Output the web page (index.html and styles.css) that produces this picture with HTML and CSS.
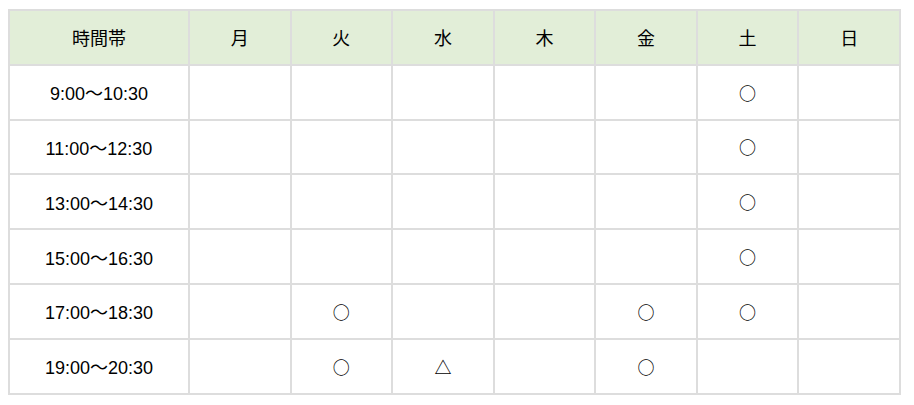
FILE: index.html
```html
<!DOCTYPE html>
<html lang="ja">
<head>
<meta charset="utf-8">
<link rel="stylesheet" href="styles.css">
</head>
<body>
<table class="schedule">
  <colgroup>
    <col class="col-time">
    <col span="7">
  </colgroup>
  <thead>
    <tr>
      <th>時間帯</th><th>月</th><th>火</th><th>水</th><th>木</th><th>金</th><th>土</th><th>日</th>
    </tr>
  </thead>
  <tbody>
    <tr><td>9:00～10:30</td><td></td><td></td><td></td><td></td><td></td><td class="mark">○</td><td></td></tr>
    <tr><td>11:00～12:30</td><td></td><td></td><td></td><td></td><td></td><td class="mark">○</td><td></td></tr>
    <tr><td>13:00～14:30</td><td></td><td></td><td></td><td></td><td></td><td class="mark">○</td><td></td></tr>
    <tr><td>15:00～16:30</td><td></td><td></td><td></td><td></td><td></td><td class="mark">○</td><td></td></tr>
    <tr><td>17:00～18:30</td><td></td><td class="mark">○</td><td></td><td></td><td class="mark">○</td><td class="mark">○</td><td></td></tr>
    <tr><td>19:00～20:30</td><td></td><td class="mark">○</td><td class="mark">△</td><td></td><td class="mark">○</td><td></td><td></td></tr>
  </tbody>
</table>
</body>
</html>
```

FILE: styles.css
```css
html, body {
  background: #ffffff;
}
body {
  margin: 9px 8px;
  font-family: "Liberation Sans", "Noto Sans CJK JP", sans-serif;
  font-size: 18px;
  color: #000000;
}
.schedule {
  width: 893px;
  table-layout: fixed;
  border-collapse: separate;
  border-spacing: 0;
  border-top: 2px solid #dddddd;
  border-left: 2px solid #dddddd;
}
.col-time {
  width: 180px;
}
.schedule th,
.schedule td {
  border-right: 2px solid #dddddd;
  border-bottom: 2px solid #dddddd;
  padding: 0;
  height: 52.8px;
  text-align: center;
  vertical-align: middle;
  font-weight: normal;
}
.schedule th {
  background: #e2eed8;
}
.schedule .mark {
  font-family: "Noto Sans CJK JP", sans-serif;
  font-size: 17px;
  font-weight: 500;
}
```
